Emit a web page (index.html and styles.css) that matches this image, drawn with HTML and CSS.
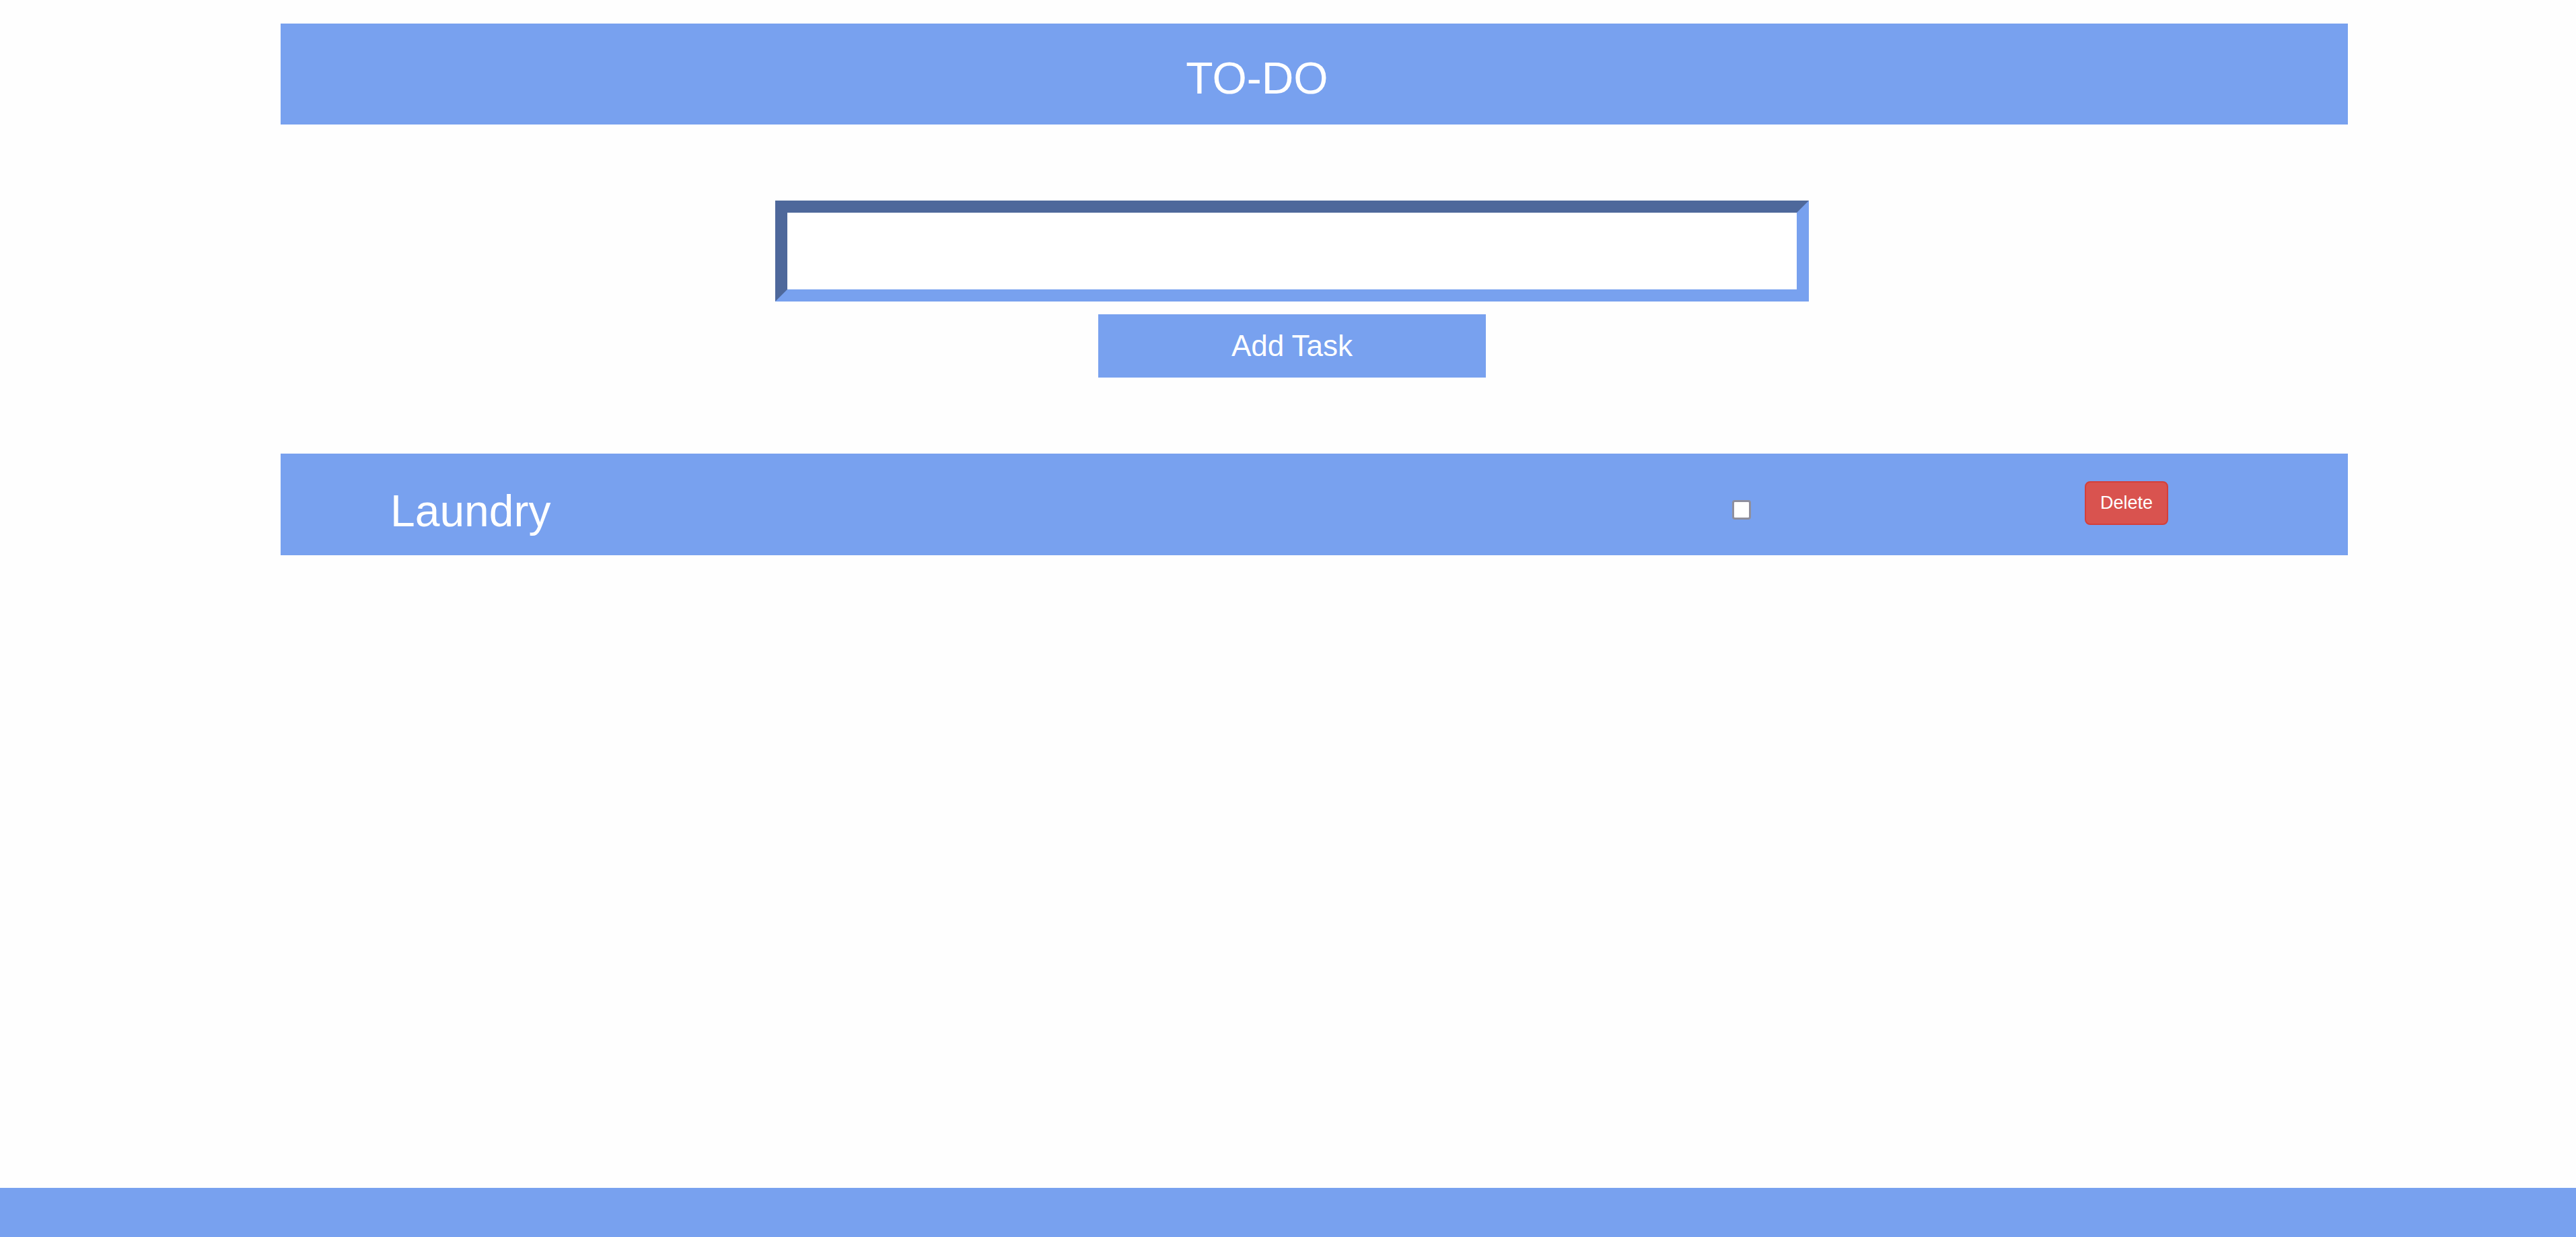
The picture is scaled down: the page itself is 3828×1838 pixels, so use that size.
FILE: index.html
```html
<!DOCTYPE html>
<html lang="en">
<head>
  <meta charset="UTF-8" />
  <meta name="viewport" content="width=device-width, initial-scale=1.0" />
  <title>TO-DO</title>
  <link rel="stylesheet" href="styles.css">
</head>
<body>
  <div class="page">
    <div class="header">
      <h1>TO-DO</h1>
    </div>

    <div class="form">
      <input type="text" id="task" />
      <button class="add" onclick="addTask()">Add Task</button>
    </div>

    <ul id="list" class="list">
      <li class="task">
        <span class="name">Laundry</span>
        <input type="checkbox" class="done" />
        <button class="delete" onclick="this.parentNode.remove()">Delete</button>
      </li>
    </ul>
  </div>

  <div class="footer"></div>

  <script>
    function addTask() {
      const input = document.getElementById("task");
      const text = input.value.trim();
      if (!text) return;

      const li = document.createElement("li");
      li.className = "task";
      li.innerHTML = `<span class="name"></span>
        <input type="checkbox" class="done" />
        <button class="delete" onclick="this.parentNode.remove()">Delete</button>`;
      li.querySelector(".name").textContent = text;
      document.getElementById("list").appendChild(li);
      input.value = "";
    }
  </script>
</body>
</html>
```

FILE: styles.css
```css
body {
  margin: 0;
  font-family: "Liberation Sans", Arial, sans-serif;
  background: #fefefe;
  min-height: 100vh;
  display: flex;
  flex-direction: column;
}
.page {
  flex: 1;
  padding-top: 35px;
}
.header {
  margin-left: 417px;
  width: 3072px;
  height: 150px;
  box-sizing: border-box;
  padding: 48px 170px 0 0;
  background: #78a1ef;
  text-align: center;
}
.header h1 {
  margin: 0;
  font-size: 66px;
  font-weight: normal;
  line-height: 1;
  color: white;
}
.form {
  margin: 113px 0 0 1152px;
  width: 1536px;
  display: flex;
  flex-direction: column;
  align-items: center;
  gap: 19px;
}
.form input {
  width: 100%;
  height: 150px;
  box-sizing: border-box;
  border: 18px inset #78a1ef;
  background: white;
  font-size: 40px;
  padding: 0 16px;
  outline: none;
}
.add {
  width: 576px;
  height: 94px;
  border: none;
  background: #78a1ef;
  color: white;
  font-family: inherit;
  font-size: 44px;
  line-height: 1;
  cursor: pointer;
}
.list {
  list-style: none;
  margin: 113px 0 0 417px;
  padding: 0;
  width: 3072px;
}
.task {
  height: 151px;
  display: flex;
  align-items: flex-start;
  background: #78a1ef;
  padding: 0 267px 0 163px;
  box-sizing: border-box;
}
.name {
  flex: 1;
  margin-top: 52px;
  font-size: 66px;
  line-height: 1;
  color: white;
}
.done {
  appearance: none;
  margin: 69px 496px 0 0;
  width: 28px;
  height: 29px;
  box-sizing: border-box;
  border: 3px solid #8f8f9d;
  border-radius: 4px;
  background: white;
}
.done:checked {
  background: #0075ff;
  border-color: #0075ff;
}
.delete {
  margin-top: 41px;
  width: 124px;
  height: 65px;
  border: 2px solid #d43f3a;
  border-radius: 8px;
  background: #d9534f;
  color: white;
  font-family: inherit;
  font-size: 27px;
  line-height: 1;
  padding: 0;
  cursor: pointer;
}
.footer {
  height: 73px;
  background: #78a1ef;
}
```
